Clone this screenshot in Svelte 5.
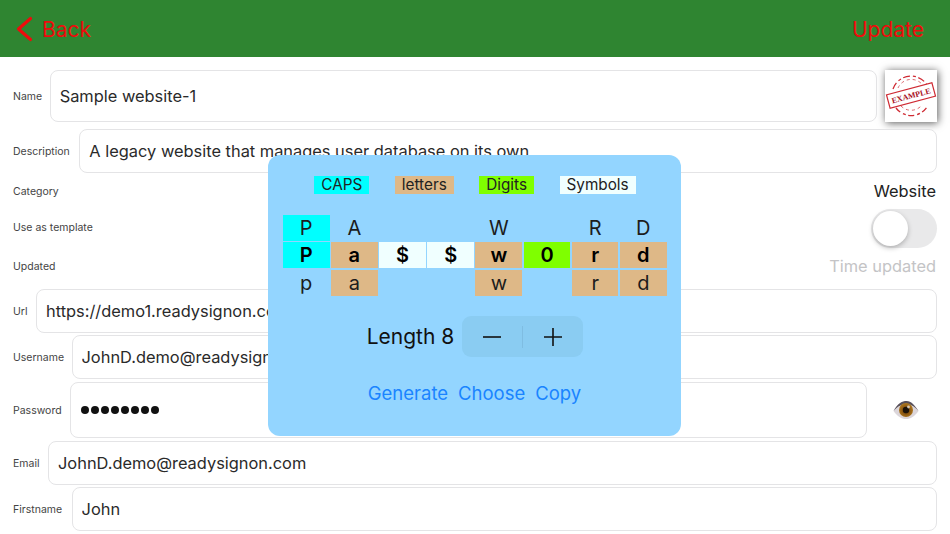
<script lang="ts">
	const legend = [
		{ label: 'CAPS', kind: 'caps' },
		{ label: 'letters', kind: 'lower' },
		{ label: 'Digits', kind: 'digit' },
		{ label: 'Symbols', kind: 'symbol' },
	];

	// one column per password character: upper hint, the character, lower hint
	const columns = [
		{ up: 'P', ch: 'P', low: 'p', kind: 'caps' },
		{ up: 'A', ch: 'a', low: 'a', kind: 'lower' },
		{ up: '', ch: '$', low: '', kind: 'symbol' },
		{ up: '', ch: '$', low: '', kind: 'symbol' },
		{ up: 'W', ch: 'w', low: 'w', kind: 'lower' },
		{ up: '', ch: '0', low: '', kind: 'digit' },
		{ up: 'R', ch: 'r', low: 'r', kind: 'lower' },
		{ up: 'D', ch: 'd', low: 'd', kind: 'lower' },
	];
</script>

<div class="page">
	<header class="topbar">
		<button type="button" class="nav back">
			<svg width="17" height="26" viewBox="0 0 17 26" fill="none">
				<path d="M14.5 2.5 L2.5 13 L14.5 23.5" stroke="#ee0c0c" stroke-width="3.2" stroke-linecap="round" stroke-linejoin="round" />
			</svg>
			<span>Back</span>
		</button>
		<button type="button" class="nav">Update</button>
	</header>

	<div class="form">
		<div class="row name">
			<span class="label">Name</span>
			<input class="field" value="Sample website-1" readonly>
			<div class="stamp">
				<svg width="52" height="52" viewBox="0 0 52 52" fill="none">
					<g stroke="#cf2a33">
						<path d="M8 19 A19 19 0 0 1 44 19" stroke-width="1.3" stroke-dasharray="7 3 3 2.5" />
						<path d="M13 18 A14.5 14.5 0 0 1 39 17" stroke-width="0.7" stroke-dasharray="3 3" />
						<path d="M11 38 A19 19 0 0 0 42 37" stroke-width="1.3" stroke-dasharray="6 3 3 2.5" />
						<path d="M16 36 A14 14 0 0 0 37 35" stroke-width="0.7" stroke-dasharray="3 3" />
						<g transform="rotate(-15 26 25.5)">
							<rect x="2.5" y="18.5" width="47" height="14" fill="#fff" stroke-width="1.2" />
						</g>
					</g>
					<text class="stamp-text" x="26" y="28.4" text-anchor="middle" transform="rotate(-15 26 25.5)">EXAMPLE</text>
				</svg>
			</div>
		</div>

		<div class="row description">
			<span class="label">Description</span>
			<input class="field" value="A legacy website that manages user database on its own" readonly>
		</div>

		<div class="row plain category">
			<span class="label">Category</span>
			<span class="value">Website</span>
		</div>

		<div class="row plain template">
			<span class="label lifted">Use as template</span>
			<span class="toggle"><span class="knob"></span></span>
		</div>

		<div class="row plain updated">
			<span class="label">Updated</span>
			<span class="value muted">Time updated</span>
		</div>

		<div class="row url">
			<span class="label">Url</span>
			<input class="field" value="https://demo1.readysignon.com" readonly>
		</div>

		<div class="row username">
			<span class="label">Username</span>
			<input class="field" value="JohnD.demo@readysignon.com" readonly>
		</div>

		<div class="row password">
			<span class="label">Password</span>
			<div class="field dots">
				{#each Array(8) as _}<i></i>{/each}
			</div>
			<div class="eye">
				<svg width="26" height="20" viewBox="0 0 26 20">
					<defs>
						<radialGradient id="iris" cx="50%" cy="55%" r="55%">
							<stop offset="0" stop-color="#3a2206" />
							<stop offset="0.45" stop-color="#8a5510" />
							<stop offset="1" stop-color="#b07a20" />
						</radialGradient>
					</defs>
					<path d="M0.5 11 C5 3 9.5 1 13.5 1 C18 1 21.5 5 25.5 11 C21.5 16.5 17.5 19 13 19 C8.5 19 4.5 16.5 0.5 11 Z" fill="#dcd6da" />
					<path d="M0.5 11 C5 3 9.5 1 13.5 1 C18 1 21.5 5 25.5 11 C20.5 5.5 17 4 13 4 C9 4 5 6 0.5 11 Z" fill="#57505a" />
					<circle cx="13" cy="10" r="7" fill="url(#iris)" />
					<circle cx="13" cy="10" r="3.2" fill="#1c1208" />
					<circle cx="15.5" cy="7" r="1.4" fill="#f0e8e0" opacity="0.8" />
				</svg>
			</div>
		</div>

		<div class="row email">
			<span class="label">Email</span>
			<input class="field" value="JohnD.demo@readysignon.com" readonly>
		</div>

		<div class="row firstname">
			<span class="label">Firstname</span>
			<input class="field" value="John" readonly>
		</div>
	</div>

	<div class="popup">
		<div class="legend">
			{#each legend as item}
				<span class="chip {item.kind}">{item.label}</span>
			{/each}
		</div>

		<div class="grid">
			{#each columns as col}
				<span class="cell" class:caps={col.kind === 'caps'}>{col.up}</span>
			{/each}
			{#each columns as col}
				<span class="cell strong {col.kind}">{col.ch}</span>
			{/each}
			{#each columns as col}
				<span class="cell" class:lower={col.kind === 'lower'}>{col.low}</span>
			{/each}
		</div>

		<div class="length">
			<span class="length-text">Length 8</span>
			<div class="stepper">
				<button type="button" aria-label="Decrease">
					<svg width="18" height="18" viewBox="0 0 18 18"><path d="M0 9 H18" stroke="#111" stroke-width="1.6" /></svg>
				</button>
				<span class="divider"></span>
				<button type="button" aria-label="Increase">
					<svg width="18" height="18" viewBox="0 0 18 18"><path d="M0 9 H18 M9 0 V18" stroke="#111" stroke-width="1.6" /></svg>
				</button>
			</div>
		</div>

		<div class="actions">
			<button type="button">Generate</button>
			<button type="button">Choose</button>
			<button type="button">Copy</button>
		</div>
	</div>
</div>

<style>
	:global(body) {
		margin: 0;
		background: #fff;
	}
	.page {
		position: relative;
		width: 950px;
		height: 534px;
		overflow: hidden;
		font-family: Inter, 'Noto Sans', sans-serif;
		color: #222;
	}
	button {
		font-family: inherit;
		background: none;
		border: none;
		padding: 0;
	}
	.topbar {
		height: 57px;
		box-sizing: border-box;
		background: #2f8531;
		display: flex;
		align-items: center;
		justify-content: space-between;
		padding: 1px 26px 0 16px;
	}
	.nav {
		color: #ee0c0c;
		font-size: 21px;
		display: flex;
		align-items: center;
		gap: 9px;
	}
	.form {
		display: flex;
		flex-direction: column;
		padding: 13px 13px 0;
	}
	.row {
		display: flex;
		align-items: center;
		gap: 8.5px;
		height: 44px;
	}
	.label {
		font-size: 10.5px;
		color: #444;
		flex-shrink: 0;
		white-space: nowrap;
	}
	.lifted {
		margin-bottom: 3px;
	}
	.field {
		flex: 1;
		min-width: 0;
		height: 100%;
		box-sizing: border-box;
		border: 1px solid #e4e4e6;
		border-radius: 8px;
		background: #fff;
		font-family: inherit;
		font-size: 16.4px;
		color: #2a2a2a;
		padding: 0 9px;
		outline: none;
	}
	.name {
		height: 52px;
		gap: 7.5px;
	}
	.name .field {
		margin-right: 0.5px;
	}
	.description {
		margin-top: 7px;
		gap: 9.5px;
	}
	.plain {
		justify-content: space-between;
		height: 36px;
	}
	.category {
		height: 36px;
	}
	.template {
		height: 39px;
	}
	.updated {
		height: 36px;
		margin-bottom: 5px;
	}
	.username {
		margin-top: 2px;
		gap: 7.5px;
	}
	.password {
		height: 56px;
		margin-top: 3px;
	}
	.email {
		margin-top: 3px;
	}
	.firstname {
		margin-top: 2px;
		gap: 9.5px;
	}
	.value {
		font-size: 16.4px;
		color: #222;
		padding-right: 1px;
	}
	.muted {
		color: #c4c4c6;
	}
	.stamp {
		width: 52px;
		height: 52px;
		background: #fff;
		box-shadow: 1px 1px 8px rgba(0, 0, 0, 0.65);
		flex-shrink: 0;
	}
	.stamp-text {
		font-family: 'Liberation Serif', serif;
		font-weight: bold;
		font-size: 8px;
		fill: #a8101c;
	}
	.toggle {
		width: 66px;
		height: 39px;
		border-radius: 20px;
		background: #e9e9ea;
		display: flex;
		align-items: center;
		padding: 2px;
		box-sizing: border-box;
	}
	.knob {
		width: 35px;
		height: 35px;
		border-radius: 50%;
		background: #fff;
		box-shadow: 0 2px 5px rgba(0, 0, 0, 0.25);
	}
	.dots {
		display: flex;
		align-items: center;
		gap: 2px;
		padding-left: 10px;
	}
	.dots i {
		width: 8px;
		height: 8px;
		border-radius: 50%;
		background: #111;
	}
	.eye {
		width: 70px;
		display: flex;
		justify-content: center;
		margin-left: -8.5px;
		padding-left: 8.5px;
		box-sizing: border-box;
	}
	.popup {
		position: absolute;
		left: 268px;
		top: 155px;
		width: 413px;
		height: 281px;
		box-sizing: border-box;
		background: #93d5ff;
		border-radius: 12px;
		display: flex;
		flex-direction: column;
		align-items: center;
		padding-top: 21px;
	}
	.legend {
		display: flex;
		gap: 25.5px;
		margin-left: 1px;
	}
	.chip {
		height: 18px;
		line-height: 18px;
		font-size: 15.3px;
		padding: 0 7px;
		color: #222;
	}
	.caps {
		background: #00ffff;
	}
	.lower {
		background: #deb887;
	}
	.digit {
		background: #7fff00;
	}
	.symbol {
		background: #f0ffff;
	}
	.grid {
		display: grid;
		grid-template-columns: repeat(8, 46.7px);
		grid-auto-rows: 26px;
		column-gap: 1.47px;
		row-gap: 1.8px;
		margin-top: 20.5px;
		margin-left: 0.5px;
	}
	.cell {
		display: flex;
		align-items: center;
		justify-content: center;
		font-size: 20px;
		color: #1c1c1c;
	}
	.strong {
		font-weight: 600;
		color: #000;
	}
	.length {
		display: flex;
		align-items: center;
		gap: 8px;
		margin-top: 20px;
		font-size: 21px;
		color: #111;
	}
	.length-text {
		margin-left: 1px;
	}
	.stepper {
		width: 121px;
		height: 41px;
		border-radius: 9px;
		background: #8accf2;
		display: flex;
		align-items: center;
	}
	.stepper button {
		flex: 1;
		display: flex;
		align-items: center;
		justify-content: center;
		height: 100%;
	}
	.divider {
		width: 1px;
		height: 22px;
		background: #7fbde2;
	}
	.actions {
		display: flex;
		gap: 10px;
		margin-top: 25px;
	}
	.actions button {
		font-size: 18.5px;
		color: #1a84ff;
	}
</style>
